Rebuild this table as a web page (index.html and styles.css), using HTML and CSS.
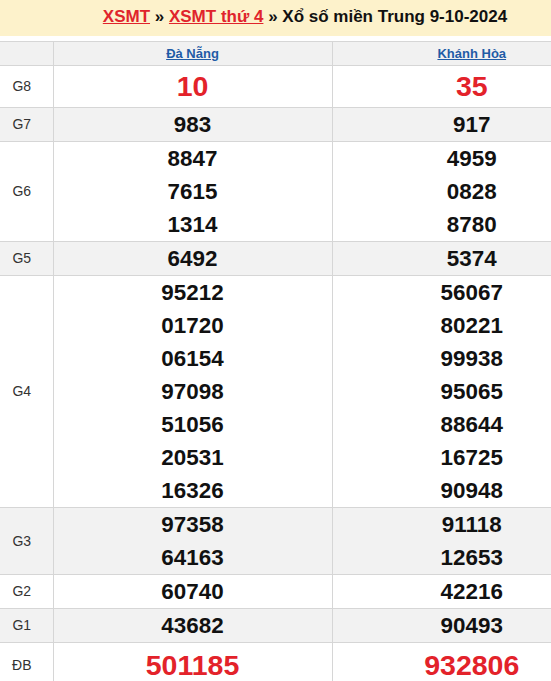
FILE: index.html
```html
<!DOCTYPE html>
<html lang="vi">
<head>
<meta charset="utf-8">
<title>XSMT thứ 4</title>
<link rel="stylesheet" href="styles.css">
</head>
<body>
<div class="page">
  <h2 class="title"><a href="#">XSMT</a> » <a href="#">XSMT thứ 4</a> » Xổ số miền Trung 9-10-2024</h2>
  <table class="results">
    <colgroup><col class="c-label"><col class="c-prov"><col class="c-prov"></colgroup>
    <thead>
      <tr class="head"><th></th><th><a href="#">Đà Nẵng</a></th><th><a href="#">Khánh Hòa</a></th></tr>
    </thead>
    <tbody>
      <tr class="big g8"><td class="lbl">G8</td><td class="red">10</td><td class="red">35</td></tr>
      <tr class="alt"><td class="lbl">G7</td><td>983</td><td>917</td></tr>
      <tr><td class="lbl">G6</td><td><div>8847</div><div>7615</div><div>1314</div></td><td><div>4959</div><div>0828</div><div>8780</div></td></tr>
      <tr class="alt"><td class="lbl">G5</td><td>6492</td><td>5374</td></tr>
      <tr><td class="lbl">G4</td><td><div>95212</div><div>01720</div><div>06154</div><div>97098</div><div>51056</div><div>20531</div><div>16326</div></td><td><div>56067</div><div>80221</div><div>99938</div><div>95065</div><div>88644</div><div>16725</div><div>90948</div></td></tr>
      <tr class="alt"><td class="lbl">G3</td><td><div>97358</div><div>64163</div></td><td><div>91118</div><div>12653</div></td></tr>
      <tr><td class="lbl">G2</td><td>60740</td><td>42216</td></tr>
      <tr class="alt"><td class="lbl">G1</td><td>43682</td><td>90493</td></tr>
      <tr class="big db"><td class="lbl">ĐB</td><td class="red">501185</td><td class="red">932806</td></tr>
    </tbody>
  </table>
</div>
</body>
</html>
```
FILE: styles.css
```css
html { overflow: hidden; }
body { margin: 0; background: #fff; font-family: "Liberation Sans", Arial, sans-serif; }
.page { width: 610px; }
.title {
  margin: 0;
  height: 36px;
  line-height: 33px;
  background: #fdf2cb;
  text-align: center;
  font-size: 17px;
  font-weight: bold;
  color: #111;
}
.title a { color: #e0242b; text-decoration: underline; }
.results {
  margin-top: 5px;
  width: 610px;
  border-collapse: collapse;
  table-layout: fixed;
}
.c-label { width: 53px; }
.c-prov { width: 279px; }
.results th, .results td {
  border: 1px solid #d6d6d6;
  padding: 0;
  text-align: center;
}
.results tr > :first-child { border-left: none; }
.results tr > :last-child { border-right: none; }
.head th { background: #f1f1f1; height: 23px; font-size: 13px; font-weight: bold; }
.head a { color: #1f5ca6; text-decoration: underline; }
.results td {
  font-size: 22.4px;
  font-weight: bold;
  color: #111;
  line-height: 33px;
}
.results td.lbl {
  font-size: 14px;
  font-weight: normal;
  color: #333;
  padding-right: 9px;
}
.alt td { background: #f2f2f2; }
.g8 td { height: 41px; }
.db td { height: 44px; }
.results td.red { color: #e3222a; font-size: 28.5px; line-height: 41px; }
.results .db td.red { line-height: 44px; }
```
